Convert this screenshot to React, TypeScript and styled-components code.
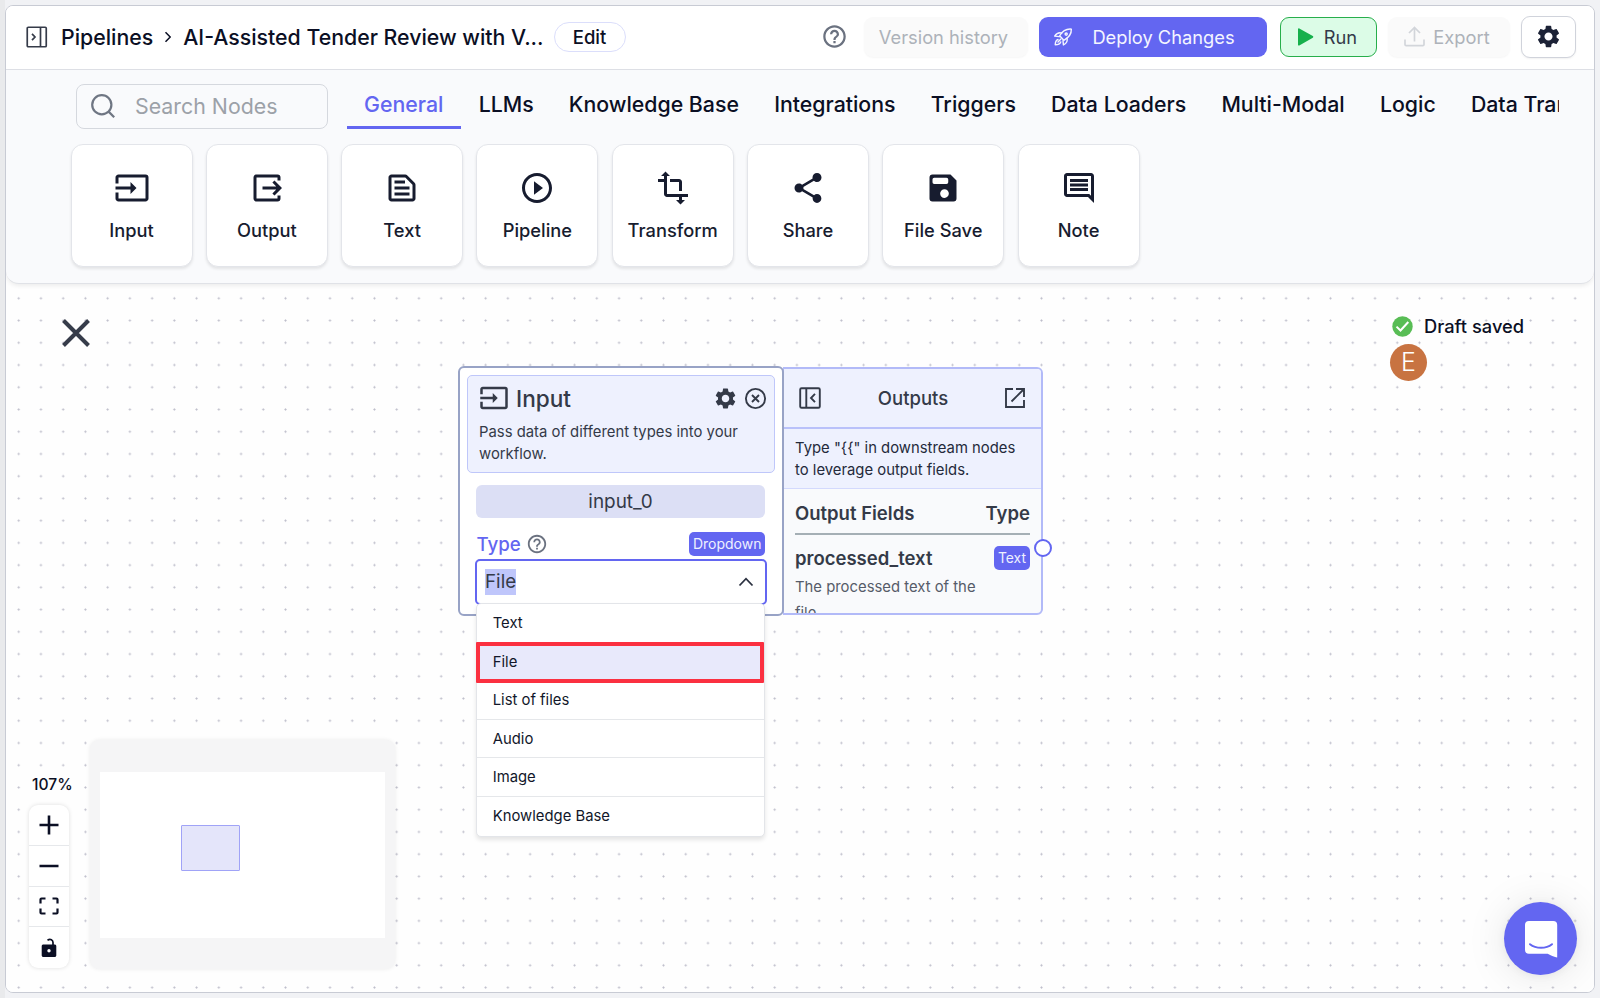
import React from 'react';
import styled, { createGlobalStyle, css } from 'styled-components';
import {
  MdHelpOutline,
  MdInput,
  MdOutlineComment,
  MdOutlineTextSnippet,
  MdOutput,
  MdPlayCircleOutline,
  MdSettings,
  MdShare,
  MdTransform,
} from 'react-icons/md';

const accent = '#6366f1';
const ink = '#0b0f24';

const GlobalStyle = createGlobalStyle`
  *, *::before, *::after { box-sizing: border-box; }
  body {
    margin: 0;
    background: linear-gradient(90deg, #e9eaec 5px, #f1f2f5 5px);
    font-family: Inter, 'Liberation Sans', sans-serif;
    color: ${ink};
  }
  svg { display: block; flex-shrink: 0; }
`;

/* ---------- Frame ---------- */

const Page = styled.div`
  height: 998px;
  padding: 5px;
  overflow: hidden;
`;

const Frame = styled.main`
  position: relative;
  display: flex;
  flex-direction: column;
  height: 988px;
  border: 1px solid #c8cbd4;
  border-radius: 8px;
  background: #fefefe;
  overflow: hidden;
`;

/* ---------- Header ---------- */

const Header = styled.header`
  display: flex;
  align-items: center;
  height: 64px;
  padding: 0 18px 2px 20px;
  border-bottom: 1px solid #dfe1e7;
  background: #fff;
`;

const Crumbs = styled.nav`
  display: flex;
  align-items: center;
  flex: 1;
  font-size: 21.3px;
  font-weight: 500;
  line-height: 28px;
  white-space: nowrap;
`;

const Crumb = styled.span`
  margin-left: 13px;
`;

const CrumbArrow = styled.svg`
  margin: 0 -2px 0 11px;
`;

const EditButton = styled.button`
  width: 72px;
  height: 30px;
  margin-left: 10px;
  padding: 0;
  border: 1px solid #dbdefb;
  border-radius: 15px;
  background: #fff;
  color: ${ink};
  font: 500 18.5px/28px Inter, sans-serif;
`;

const Actions = styled.div`
  display: flex;
  align-items: center;
  gap: 11px;
  color: #6b7280;

  > svg { margin-right: 5px; }
`;

type Tone = 'muted' | 'primary' | 'run' | 'plain';

const tones = {
  muted: css`
    background: #fafafa;
    color: #adb2b9;
    box-shadow: 0 1px 2px rgba(0, 0, 0, 0.04);
  `,
  primary: css`
    margin-right: 2px;
    background: ${accent};
    color: #f4f5ff;
  `,
  run: css`
    background: #dcfce7;
    border: 1px solid #27ae4b;
    color: #343a49;
  `,
  plain: css`
    background: #fff;
    border: 1px solid #d0d3db;
    color: #1c2236;
    box-shadow: 0 1px 2px rgba(0, 0, 0, 0.06);
  `,
};

const ActionButton = styled.button<{ $tone: Tone; $width: number; $gap?: number; $trail?: number }>`
  display: flex;
  align-items: center;
  justify-content: center;
  gap: ${(p) => p.$gap ?? 0}px;
  width: ${(p) => p.$width}px;
  height: ${(p) => (p.$tone === 'plain' ? 42 : 40)}px;
  padding: 0 ${(p) => p.$trail ?? 0}px 0 0;
  border: 0;
  border-radius: 9px;
  font: 400 18.3px/24px Inter, sans-serif;
  white-space: nowrap;
  ${(p) => tones[p.$tone]}
`;

/* ---------- Node palette ---------- */

const Palette = styled.section`
  position: relative;
  z-index: 1;
  height: 214px;
  padding: 14px 35px 0 64px;
  border-bottom: 1px solid #e0e2e7;
  border-radius: 0 0 13px 13px;
  background: #f9fafc;
  box-shadow: 0 2px 4px rgba(0, 0, 0, 0.07);
`;

const PaletteTop = styled.div`
  display: flex;
  align-items: flex-start;
  padding-left: 6px;
`;

const Search = styled.label`
  display: flex;
  align-items: center;
  flex: none;
  gap: 19px;
  width: 252px;
  height: 45px;
  padding: 0 0 1px 13px;
  border: 1px solid #d5d8de;
  border-radius: 8px;
  color: #9ca1a8;
  font-size: 21.35px;
`;

const Tabs = styled.div`
  display: flex;
  flex: 1;
  min-width: 0;
  margin-left: 18.5px;
  overflow: hidden;
`;

const Tab = styled.div<{ $active?: boolean }>`
  flex: none;
  height: 45px;
  padding: 6px 17.6px 0;
  border-bottom: 3px solid ${(p) => (p.$active ? accent : 'transparent')};
  color: ${(p) => (p.$active ? accent : ink)};
  font-size: 21.3px;
  font-weight: 500;
  line-height: 29px;
  white-space: nowrap;
`;

const Cards = styled.div`
  display: flex;
  gap: 13.3px;
  margin: 15px 0 0 0.5px;
`;

const Card = styled.div`
  display: flex;
  flex-direction: column;
  align-items: center;
  gap: 11.5px;
  width: 122px;
  height: 123px;
  padding-top: 25px;
  border: 1px solid #e3e5ea;
  border-radius: 12px;
  background: #fff;
  color: #171c2f;
  box-shadow: 0 2px 3px rgba(0, 0, 0, 0.09);
  font-size: 18.3px;
  font-weight: 500;
  line-height: 24px;
  white-space: nowrap;
`;

/* ---------- Canvas ---------- */

const Canvas = styled.section`
  position: relative;
  flex: 1;
  margin-top: -14px;
  background-color: #fefefe;
  background-image: radial-gradient(circle, #bdbdca 0.7px, rgba(189, 189, 202, 0) 1.4px);
  background-size: 22.24px 22.24px;
  background-position: 1.6px 17.2px;
`;

const Exit = styled.div`
  position: absolute;
  left: 55px;
  top: 48px;
`;

const Status = styled.div`
  position: absolute;
  left: 1384px;
  top: 43px;
  display: flex;
  flex-direction: column;
  gap: 5px;
`;

const Saved = styled.div`
  display: flex;
  align-items: center;
  gap: 11px;
  height: 26px;
  padding-left: 2px;
  font-size: 18.3px;
  font-weight: 500;
`;

const Avatar = styled.div`
  width: 37px;
  height: 37px;
  border-radius: 50%;
  background: #c87341;
  color: #fff;
  font-size: 25px;
  font-weight: 300;
  line-height: 37px;
  text-align: center;
`;

/* ---------- Node ---------- */

const Node = styled.article`
  position: absolute;
  left: 452px;
  top: 96px;
  display: flex;
  color: #343a48;
`;

const NodeMain = styled.div`
  position: relative;
  z-index: 1;
  width: 326px;
  height: 250px;
  padding: 7px 7px 0;
  border: 2px solid #98a3c6;
  border-radius: 6px;
  background: #fff;
`;

const NodeHead = styled.div`
  height: 98px;
  padding: 7px 7px 0 11px;
  border: 1px solid #bfc7fa;
  border-radius: 5px;
  background: #eef1fe;
`;

const NodeTitle = styled.div`
  display: flex;
  align-items: center;
  height: 30px;
  margin-bottom: 8px;
  font-size: 22.6px;
  font-weight: 500;

  > span { flex: 1; margin-left: 7px; }
  > svg:last-child { margin-left: 6px; }
`;

const SmallText = styled.p`
  margin: 0;
  font-size: 14.85px;
  line-height: 22px;
`;

const NodeBody = styled.div`
  padding: 12px 10px 0 9px;
`;

const NodeName = styled.div`
  height: 33px;
  border-radius: 6px;
  background: #dcdff5;
  font-size: 18.9px;
  line-height: 33px;
  text-align: center;
`;

const FieldRow = styled.div`
  display: flex;
  align-items: center;
  gap: 5px;
  height: 24px;
  margin-top: 14px;
  padding-left: 0.5px;
  color: #6b7280;
`;

const FieldLabel = styled.span`
  color: ${accent};
  font-size: 18.7px;
  font-weight: 500;
`;

const Badge = styled.span`
  margin-left: auto;
  padding: 0 3.5px;
  border-radius: 5px;
  background: ${accent};
  color: #eef0ff;
  font-size: 14px;
  line-height: 24px;
`;

const Select = styled.div`
  display: flex;
  align-items: center;
  justify-content: space-between;
  height: 46px;
  margin: 3px -2px 0 -1px;
  padding: 0 11px 0 8px;
  border: 2px solid ${accent};
  border-radius: 5px;
  background: #fff;
`;

const Selected = styled.span`
  background: #bfc6fb;
  font-size: 18.8px;
  line-height: 26px;
`;

const Menu = styled.ul`
  position: absolute;
  left: 16px;
  top: 235px;
  z-index: 2;
  width: 289px;
  margin: 0;
  padding: 0;
  border: 1px solid #e3e5e9;
  border-radius: 5px;
  background: #fff;
  box-shadow: 0 3px 4px rgba(0, 0, 0, 0.1);
  list-style: none;
`;

const MenuItem = styled.li<{ $chosen?: boolean }>`
  height: 38.6px;
  padding-left: 15.7px;
  border-bottom: 1px solid #e5e7ea;
  color: #12172a;
  font-size: 14.85px;
  line-height: 39px;
  &:last-child { border-bottom: 0; }
  ${(p) =>
    p.$chosen &&
    css`
      height: 41px;
      margin: -0.8px 0 -1.5px -1px;
      padding-left: 12.7px;
      border: 4px solid #fb3040 !important;
      border-radius: 1px;
      background: #e8e9fb;
      line-height: 33px;
    `}
`;

const Outputs = styled.div`
  width: 260px;
  height: 248px;
  margin: 1px 0 0 -1px;
  border: 2px solid #b2baf8;
  border-left-width: 1px;
  border-radius: 0 6px 6px 0;
  background: #f9fafc;
  overflow: hidden;
`;

const OutputsHead = styled.div`
  display: flex;
  align-items: center;
  justify-content: space-between;
  height: 60px;
  padding: 0 15px 0 14px;
  border-bottom: 2px solid #b9c1fa;
  background: #eef1fe;
  font-size: 18.5px;
  font-weight: 500;
`;

const OutputsHint = styled.div`
  height: 60px;
  padding: 8px 0 0 11px;
  border-bottom: 1px solid #d3d9fd;
  background: #eef1fe;
  color: #242a3b;
  white-space: pre-line;
`;

const OutputsTable = styled.div`
  padding: 0 11px;
`;

const OutputsRow = styled.div<{ $head?: boolean }>`
  display: flex;
  align-items: center;
  justify-content: space-between;
  height: ${(p) => (p.$head ? 46 : 46)}px;
  padding-top: ${(p) => (p.$head ? 3 : 0)}px;
  border-bottom: ${(p) => (p.$head ? '2px solid #a5afb5' : '0')};
  font-size: 18.5px;
  font-weight: 600;

  ${Badge} { font-weight: 400; padding: 0 4px; font-size: 13.9px; }
`;

const OutputsNote = styled(SmallText)`
  margin-top: -7px;
  padding-right: 40px;
  color: #565c69;
  line-height: 26px;
`;

const Handle = styled.i`
  position: absolute;
  right: -9px;
  top: 173px;
  width: 18px;
  height: 18px;
  border: 2px solid ${accent};
  border-radius: 50%;
  background: #fff;
`;

/* ---------- Viewport controls ---------- */

const Controls = styled.div`
  position: absolute;
  left: 23px;
  bottom: 23px;
  display: flex;
  align-items: flex-end;
  gap: 20.5px;
`;

const ZoomStack = styled.div`
  display: flex;
  flex-direction: column;
  width: 40px;
  margin-bottom: 0.7px;
`;

const ZoomLevel = styled.div`
  margin: 0 -8px 10px 3px;
  font-size: 15.6px;
  font-weight: 500;
  line-height: 20px;
`;

const ZoomButtons = styled.div`
  border-radius: 9px;
  background: #fff;
  box-shadow: 0 0 4px rgba(0, 0, 0, 0.13);
`;

const ZoomButton = styled.div`
  display: grid;
  place-items: center;
  height: 40.9px;
  border-bottom: 1px solid #e6e8eb;
  &:last-child { border-bottom: 0; }
`;

const MiniMap = styled.div`
  width: 305px;
  height: 229px;
  padding: 32px 10px 0;
  border-radius: 9px;
  background: #f5f5f6;
  box-shadow: 0 0 4px rgba(0, 0, 0, 0.08);
`;

const MiniView = styled.div`
  height: 166px;
  padding: 53px 0 0 81px;
  background: #fff;
`;

const MiniNode = styled.div`
  width: 59px;
  height: 46px;
  border: 1px solid #a0a3f7;
  border-radius: 1px;
  background: #e4e5fa;
`;

const Chat = styled.div`
  position: absolute;
  right: 17px;
  bottom: 17px;
  display: grid;
  place-items: center;
  width: 73px;
  height: 73px;
  border-radius: 50%;
  background: ${accent};
  box-shadow: 0 1px 8px rgba(0, 0, 0, 0.06), 0 2px 42px rgba(0, 0, 0, 0.1);
`;

/* ---------- Icons ---------- */

const SidebarIcon = () => (
  <svg width="22" height="22" viewBox="0 0 22 22" fill="none" stroke="#353b49" strokeWidth="1.7">
    <rect x="1.25" y="1.25" width="19" height="19.5" rx="1" />
    <path d="M14.5 1.2v19.6M6 7.8l3 3.2-3 3.2" />
  </svg>
);

const CloseIcon = () => (
  <svg width="30" height="30" viewBox="0 0 30 30" fill="none" stroke="#363c4a" strokeWidth="4">
    <path d="m2.500 2.500 25 25M27.500 2.500l-25 25" />
  </svg>
);

const CollapseIcon = () => (
  <svg width="24" height="24" viewBox="0 0 24 24" fill="none" stroke="currentColor" strokeWidth="1.9">
    <rect x="2.2" y="2.2" width="19.6" height="19.6" rx="1.4" />
    <path d="M8.3 2.2v19.6M17 7.8 13 12l4 4.2" />
  </svg>
);

const OpenIcon = () => (
  <svg width="22" height="22" viewBox="0 0 22 22" fill="none" stroke="currentColor" strokeWidth="1.9">
    <path d="M9 2H2v18h18v-7M12 2h8v8M20 2 7.5 14.5" />
  </svg>
);

const RemoveIcon = () => (
  <svg width="23" height="23" viewBox="0 0 23 23" fill="none" stroke="currentColor" strokeWidth="1.9">
    <circle cx="11.5" cy="11.5" r="9.6" />
    <path d="m8 8 7 7M15 8l-7 7" />
  </svg>
);

const SearchIcon = () => (
  <svg width="26" height="26" viewBox="0 0 26 26" fill="none" stroke="#6f7683" strokeWidth="2.2">
    <circle cx="11.8" cy="11.8" r="9.6" />
    <path d="m18.6 18.6 5.6 5.6" />
  </svg>
);

const RocketIcon = () => (
  <svg width="20" height="20" viewBox="0 0 24 24" fill="none" stroke="currentColor" strokeWidth="1.700" strokeLinejoin="round" strokeLinecap="round">
    <path d="M22 2.500c-6-.5-10.500 2-14 8L13 16C19.500 12.500 22.300 8.500 22 2.500Z" />
    <path d="M10.500 7.300C6.800 6.300 4 8 2 11l5.600.6M16.800 13.500c1 3.500-.6 6.200-4.300 8L12 16.500" />
    <path d="M6 15c-2.500.8-3.200 3.300-3.300 6.300 3.300 0 5.700-1 6.600-3.300M6 18l3.500-3.500" />
    <circle cx="15.800" cy="8.500" r="1.300" />
  </svg>
);

const PlayIcon = () => (
  <svg width="17" height="18" viewBox="0 0 17 18" fill="#16b04c">
    <path d="M1 1.200c0-.8.7-1.100 1.300-.7l13.500 7.600c.7.400.7 1.300 0 1.700L2.300 17.500c-.6.3-1.300 0-1.300-.8z" />
  </svg>
);

const UploadIcon = () => (
  <svg width="21" height="21" viewBox="0 0 21 21" fill="none" stroke="#d2d5da" strokeWidth="1.700">
    <path d="M1 13.500v5c0 .8.500 1.200 1.200 1.200h16.600c.7 0 1.200-.4 1.200-1.200v-5M10.500 15.500V1.500M5 7l5.500-5.500L16 7" />
  </svg>
);

const SaveIcon = () => (
  <svg width="36" height="36" viewBox="0 0 24 24" fill="currentColor" fillRule="evenodd">
    <path d="M5 3h12l4 4v12a2 2 0 0 1-2 2H5a2 2 0 0 1-2-2V5a2 2 0 0 1 2-2ZM6.300 5.200A1.200 1.200 0 0 0 5 6.400v1.700a1.200 1.200 0 0 0 1.300 1.200h8a1.200 1.200 0 0 0 1.200-1.200V6.400a1.200 1.200 0 0 0-1.200-1.200ZM13 12.800a2.900 2.900 0 1 0 0 5.800 2.900 2.900 0 0 0 0-5.800Z" />
  </svg>
);

const PlusIcon = () => (
  <svg width="20" height="20" viewBox="0 0 20 20" fill="none" stroke={ink} strokeWidth="2.600">
    <path d="M.5 10h19M10 .5v19" />
  </svg>
);

const MinusIcon = () => (
  <svg width="20" height="20" viewBox="0 0 20 20" fill="none" stroke={ink} strokeWidth="2.600">
    <path d="M.5 10h19" />
  </svg>
);

const FitIcon = () => (
  <svg width="20" height="18" viewBox="0 0 20 18" fill="none" stroke={ink} strokeWidth="2.200">
    <path d="M1.500 6.500V2.500c0-.6.400-1 1-1h4M13.500 1.500h4c.6 0 1 .4 1 1v4M18.500 11.500v4c0 .6-.4 1-1 1h-4M6.500 16.500h-4c-.6 0-1-.4-1-1v-4" />
  </svg>
);

const LockIcon = () => (
  <svg width="16" height="20" viewBox="0 0 16 20">
    <path d="M6.500 2.200C9.500.2 12 2 12 4.600V7" fill="none" stroke={ink} strokeWidth="1.700" />
    <path fill={ink} fillRule="evenodd" d="M2 6.500h12A1.500 1.500 0 0 1 15.300 8v9.500A1.500 1.500 0 0 1 14 19H2A1.500 1.500 0 0 1 .700 17.500V8A1.500 1.500 0 0 1 2 6.500ZM8 11a1.700 1.700 0 1 0 0 3.400A1.700 1.700 0 0 0 8 11Z" />
  </svg>
);

const CheckIcon = () => (
  <svg width="21" height="21" viewBox="0 0 21 21">
    <circle cx="10.500" cy="10.500" r="10.200" fill="#58bd55" />
    <path d="m4.500 10.600 4 3.900 7.800-8.500" fill="none" stroke="#fff" strokeWidth="2" />
  </svg>
);

const ChatIcon = () => (
  <svg width="34" height="38" viewBox="0 0 34 38">
    <path d="M5 1h24.200A4 4 0 0 1 33.200 5v32.500s-6-1.500-9.500-3.800H5a4 4 0 0 1-4-4V5a4 4 0 0 1 4-4Z" fill="#fff" />
    <path d="M6 24.200c6 4.800 16 4.800 22 0" fill="none" stroke={accent} strokeWidth="2" strokeLinecap="round" />
  </svg>
);

/* ---------- Data ---------- */

const tabs = ['General', 'LLMs', 'Knowledge Base', 'Integrations', 'Triggers', 'Data Loaders', 'Multi-Modal', 'Logic', 'Data Transformation'];

const cards = [
  { label: 'Input', icon: <MdInput size={36} /> },
  { label: 'Output', icon: <MdOutput size={36} /> },
  { label: 'Text', icon: <MdOutlineTextSnippet size={36} /> },
  { label: 'Pipeline', icon: <MdPlayCircleOutline size={36} /> },
  { label: 'Transform', icon: <MdTransform size={36} /> },
  { label: 'Share', icon: <MdShare size={36} /> },
  { label: 'File Save', icon: <SaveIcon /> },
  { label: 'Note', icon: <MdOutlineComment size={36} /> },
];

const options = ['Text', 'File', 'List of files', 'Audio', 'Image', 'Knowledge Base'];

export default function App() {
  return (
    <Page>
      <GlobalStyle />
      <Frame>
        <Header>
          <Crumbs>
            <SidebarIcon />
            <Crumb>Pipelines</Crumb>
            <CrumbArrow width="8" height="12" viewBox="0 0 8 12" fill="none" stroke={ink} strokeWidth="1.500">
              <path d="m1.500 1.200 4.700 4.800-4.700 4.800" />
            </CrumbArrow>
            <Crumb>AI-Assisted Tender Review with V...</Crumb>
            <EditButton>Edit</EditButton>
          </Crumbs>
          <Actions>
            <MdHelpOutline size={27} />
            <ActionButton $tone="muted" $width={164} $trail={5}>Version history</ActionButton>
            <ActionButton $tone="primary" $width={228} $gap={19} $trail={18}>
              <RocketIcon />
              Deploy Changes
            </ActionButton>
            <ActionButton $tone="run" $width={97} $gap={10} $trail={3}>
              <PlayIcon />
              Run
            </ActionButton>
            <ActionButton $tone="muted" $width={122} $gap={8} $trail={4}>
              <UploadIcon />
              Export
            </ActionButton>
            <ActionButton $tone="plain" $width={55}>
              <MdSettings size={27} />
            </ActionButton>
          </Actions>
        </Header>

        <Palette>
          <PaletteTop>
            <Search>
              <SearchIcon />
              Search Nodes
            </Search>
            <Tabs>
              {tabs.map((t, i) => (
                <Tab key={t} $active={i === 0}>{t}</Tab>
              ))}
            </Tabs>
          </PaletteTop>
          <Cards>
            {cards.map((c) => (
              <Card key={c.label}>
                {c.icon}
                {c.label}
              </Card>
            ))}
          </Cards>
        </Palette>

        <Canvas>
          <Exit>
            <CloseIcon />
          </Exit>

          <Status>
            <Saved>
              <CheckIcon />
              Draft saved
            </Saved>
            <Avatar>E</Avatar>
          </Status>

          <Node>
            <NodeMain>
              <NodeHead>
                <NodeTitle>
                  <MdInput size={30} />
                  <span>Input</span>
                  <MdSettings size={25} />
                  <RemoveIcon />
                </NodeTitle>
                <SmallText>Pass data of different types into your workflow.</SmallText>
              </NodeHead>
              <NodeBody>
                <NodeName>input_0</NodeName>
                <FieldRow>
                  <FieldLabel>Type</FieldLabel>
                  <MdHelpOutline size={22} />
                  <Badge>Dropdown</Badge>
                </FieldRow>
                <Select>
                  <Selected>File</Selected>
                  <svg width="16" height="10" viewBox="0 0 16 10" fill="none" stroke="#2b3140" strokeWidth="1.800">
                    <path d="M1.500 8.500 8 1.700l6.500 6.800" />
                  </svg>
                </Select>
              </NodeBody>
              <Menu>
                {options.map((o) => (
                  <MenuItem key={o} $chosen={o === 'File'}>{o}</MenuItem>
                ))}
              </Menu>
            </NodeMain>
            <Outputs>
              <OutputsHead>
                <CollapseIcon />
                Outputs
                <OpenIcon />
              </OutputsHead>
              <OutputsHint>
                <SmallText>{'Type "{{" in downstream nodes\nto leverage output fields.'}</SmallText>
              </OutputsHint>
              <OutputsTable>
                <OutputsRow $head>
                  <span>Output Fields</span>
                  <span>Type</span>
                </OutputsRow>
                <OutputsRow>
                  <span>processed_text</span>
                  <Badge>Text</Badge>
                </OutputsRow>
                <OutputsNote>The processed text of the file.</OutputsNote>
              </OutputsTable>
            </Outputs>
            <Handle />
          </Node>

          <Controls>
            <ZoomStack>
              <ZoomLevel>107%</ZoomLevel>
              <ZoomButtons>
                <ZoomButton><PlusIcon /></ZoomButton>
                <ZoomButton><MinusIcon /></ZoomButton>
                <ZoomButton><FitIcon /></ZoomButton>
                <ZoomButton><LockIcon /></ZoomButton>
              </ZoomButtons>
            </ZoomStack>
            <MiniMap>
              <MiniView>
                <MiniNode />
              </MiniView>
            </MiniMap>
          </Controls>

          <Chat>
            <ChatIcon />
          </Chat>
        </Canvas>
      </Frame>
    </Page>
  );
}
